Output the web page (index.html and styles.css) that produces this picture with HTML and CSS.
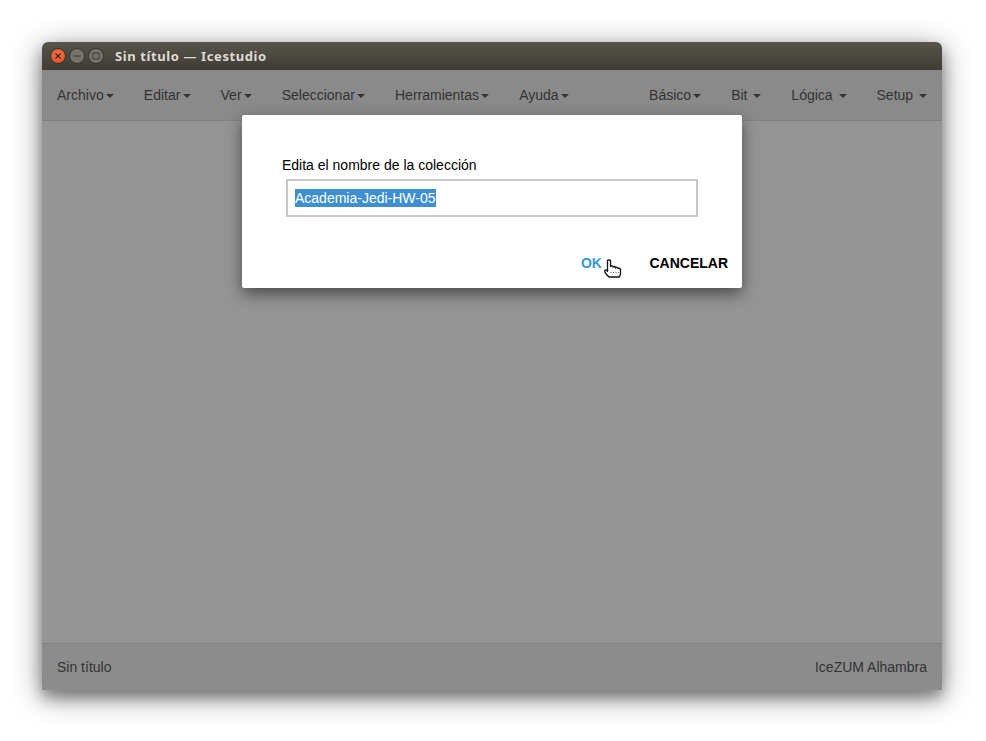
FILE: index.html
```html
<!DOCTYPE html>
<html lang="es">
<head>
  <meta charset="UTF-8">
  <title>Sin título — Icestudio</title>
  <link rel="stylesheet" href="styles.css">
</head>
<body>
  <div id="window">
    <div class="titlebar">
      <div class="win-buttons">
        <span class="win-btn close">
          <svg width="8" height="8" viewBox="0 0 8 8"><path d="M1.5 1.500l5 5M6.500 1.500l-5 5" stroke="#4a1a08" stroke-width="1.100"/></svg>
        </span>
        <span class="win-btn">
          <svg width="8" height="8" viewBox="0 0 8 8"><path d="M0.500 4h7" stroke="#3a3a36" stroke-width="1.100"/></svg>
        </span>
        <span class="win-btn">
          <svg width="8" height="8" viewBox="0 0 8 8"><rect x="1" y="1" width="6" height="6" fill="none" stroke="#3a3a36"/></svg>
        </span>
      </div>
      <span class="win-title">Sin título — Icestudio</span>
    </div>

    <nav class="navbar">
      <ul class="menu main-menu">
        <li>Archivo<span class="caret"></span></li>
        <li>Editar<span class="caret"></span></li>
        <li>Ver<span class="caret"></span></li>
        <li>Seleccionar<span class="caret"></span></li>
        <li>Herramientas<span class="caret"></span></li>
        <li>Ayuda<span class="caret"></span></li>
      </ul>
      <ul class="menu">
        <li>Básico<span class="caret"></span></li>
        <li>Bit <span class="caret"></span></li>
        <li>Lógica <span class="caret"></span></li>
        <li>Setup <span class="caret"></span></li>
      </ul>
    </nav>

    <main class="canvas"></main>

    <footer class="statusbar">
      <span>Sin título</span>
      <span>IceZUM Alhambra</span>
    </footer>

    <div class="modal">
      <div class="modal-label">Edita el nombre de la colección</div>
      <div class="modal-input"><span class="selected">Academia-Jedi-HW-05</span></div>
      <div class="modal-buttons">
        <span class="btn-ok">OK</span>
        <span class="btn-cancel">CANCELAR</span>
      </div>
      <svg class="hand" width="18" height="20" viewBox="0 0 18 20">
        <path d="M3.500 2c0-1.500 3-1.500 3 0v5.500c0-1 2.500-1 2.500.2v.5c0-1 2.500-1 2.500.2v.6c0-1 2.500-1 2.500.2v.5c0-.8 2.500-.8 2.500.8v4c0 1.500-.5 2.400-1.200 3.500H5C4 17 1 13.500 .800 12.300c-.3-1.300 1-1.900 1.800-1.100l.9 1z" fill="#fff" stroke="#111" stroke-width="1.300" stroke-linejoin="round"/>
        <path d="M7 13v2M9.500 13v2M12 13v2M14.300 13v2" stroke="#555" stroke-width="0.900" stroke-dasharray="1 1"/>
      </svg>
    </div>
  </div>
</body>
</html>
```

FILE: styles.css
```css
/* General Styling */
html, body {
  height: 100%;
}

body {
  margin: 0;
  padding: 42px 44px 51px 42px;
  box-sizing: border-box;
  background: #fff;
  font-family: 'Liberation Sans', Arial, sans-serif;
  font-size: 14px;
  color: #333;
  overflow: hidden;
}

#window {
  position: relative;
  display: flex;
  flex-direction: column;
  height: 100%;
  border-radius: 6px 6px 0 0;
  box-shadow: 0 8px 14px rgba(0, 0, 0, 0.3), 0 6px 30px rgba(0, 0, 0, 0.45);
}

/* Title bar */
.titlebar {
  display: flex;
  align-items: center;
  height: 28px;
  padding-left: 8px;
  flex-shrink: 0;
  background: linear-gradient(to bottom, #57544b, #3e3c35);
  border-radius: 6px 6px 0 0;
}

.win-buttons {
  display: flex;
  gap: 3px;
}

.win-btn {
  display: flex;
  align-items: center;
  justify-content: center;
  width: 16px;
  height: 16px;
  border-radius: 50%;
  background: #75736b;
  border: 0.5px solid #35332d;
  box-sizing: border-box;
}

.win-btn.close {
  background: radial-gradient(circle at 50% 40%, #f4794a, #d8481c);
}

.win-title {
  margin-left: 11px;
  font-family: 'Noto Sans', sans-serif;
  font-size: 13px;
  font-weight: 700;
  color: #dfdbd2;
  letter-spacing: 0.6px;
}

/* Menu bar */
.navbar {
  display: flex;
  justify-content: space-between;
  height: 50px;
  flex-shrink: 0;
  background: #8a8a8a;
  border-bottom: 1px solid #7f7f7f;
}

.menu {
  display: flex;
  list-style: none;
  margin: 0;
  padding: 0;
}

.menu li {
  padding: 0 15px;
  line-height: 50px;
  color: #333;
  white-space: nowrap;
}

.caret {
  display: inline-block;
  width: 0;
  height: 0;
  margin-left: 2px;
  vertical-align: middle;
  border-top: 4px solid #333;
  border-left: 4px solid transparent;
  border-right: 4px solid transparent;
}

.main-menu .caret {
  margin-left: 2.15px;
}

/* Work area */
.canvas {
  flex: 1;
  background: #959595;
}

.statusbar {
  display: flex;
  justify-content: space-between;
  align-items: center;
  height: 46px;
  padding: 0 15px;
  flex-shrink: 0;
  background: #8c8c8c;
  border-top: 1px solid #7f7f7f;
  color: #333;
}

/* Dialog */
.modal {
  position: absolute;
  top: 73px;
  left: 200px;
  width: 500px;
  height: 173px;
  box-sizing: border-box;
  padding: 42px 14px 0 40px;
  background: #fff;
  border-radius: 2px;
  box-shadow: 0 6px 16px rgba(0, 0, 0, 0.5);
  color: #000;
}

.modal-label {
  line-height: 16px;
}

.modal-input {
  width: 412px;
  height: 38px;
  margin: 6px 0 0 4px;
  padding: 0 7px;
  box-sizing: border-box;
  border: 2px solid #c8c8c8;
  line-height: 34px;
  color: #333;
}

.selected {
  padding: 1px 0;
  background: #3d8fd1;
  color: #fff;
}

.modal-buttons {
  display: flex;
  justify-content: flex-end;
  gap: 47.5px;
  margin-top: 38px;
  font-weight: 700;
  line-height: 16px;
}

.btn-ok {
  color: #3498db;
}

.hand {
  position: absolute;
  left: 362px;
  top: 144px;
}
```
